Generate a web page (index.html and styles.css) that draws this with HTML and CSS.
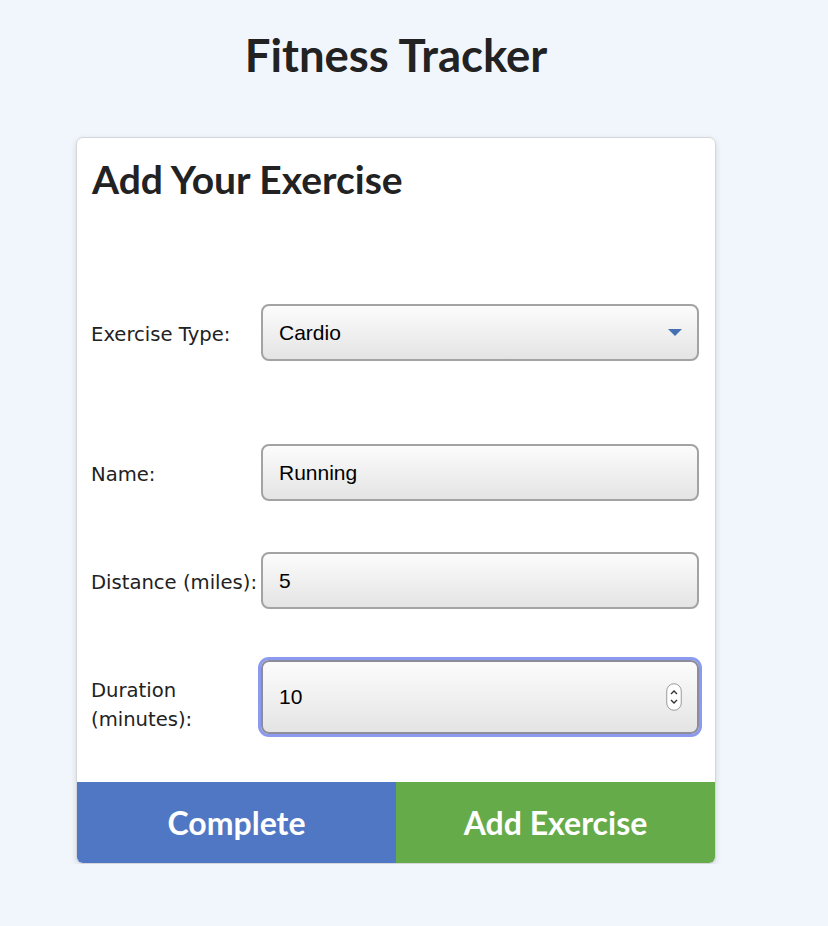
FILE: index.html
```html
<!DOCTYPE html>
<html lang="en">
<head>
<meta charset="utf-8">
<title>Fitness Tracker</title>
<link rel="stylesheet" href="styles.css">
</head>
<body>
<h1 class="page-title">Fitness Tracker</h1>
<div class="card">
  <h2 class="card-title">Add Your Exercise</h2>
  <form class="form">
    <div class="row row-first">
      <label class="label">Exercise Type:</label>
      <div class="field select">
        <span class="value">Cardio</span>
        <svg class="arrow" width="16" height="10" viewBox="0 0 16 10"><path d="M1 1 H15 L8 8 Z" fill="#4570b4"/></svg>
      </div>
    </div>
    <div class="row">
      <label class="label">Name:</label>
      <div class="field"><span class="value">Running</span></div>
    </div>
    <div class="row">
      <label class="label">Distance (miles):</label>
      <div class="field"><span class="value">5</span></div>
    </div>
    <div class="row">
      <label class="label">Duration<br>(minutes):</label>
      <div class="field focused">
        <span class="value">10</span>
        <svg class="spin" width="16" height="28" viewBox="0 0 16 28">
          <rect x="0.75" y="0.75" width="14.5" height="26.5" rx="7.25" fill="#fff" stroke="#9a9a9a" stroke-width="1"/>
          <path d="M5 11 L8 8 L11 11" fill="none" stroke="#333" stroke-width="1.4"/>
          <path d="M5 17 L8 20 L11 17" fill="none" stroke="#333" stroke-width="1.4"/>
        </svg>
      </div>
    </div>
  </form>
  <div class="actions">
    <button class="btn btn-complete" type="button">Complete</button>
    <button class="btn btn-add" type="button">Add Exercise</button>
  </div>
</div>
</body>
</html>
```

FILE: styles.css
```css
html, body {
  margin: 0;
  padding: 0;
}
body {
  background: #f1f6fd;
  font-family: "DejaVu Sans", sans-serif;
  color: #222;
}
.page-title {
  font-family: Lato, sans-serif;
  font-weight: 700;
  font-size: 45.5px;
  color: #222;
  margin: 0;
  padding-top: 28px;
  height: 110px;
  box-sizing: border-box;
  text-align: center;
  padding-right: 36px;
  line-height: 54px;
}
.card {
  margin: 27px 0 0 76px;
  width: 640px;
  box-sizing: border-box;
  background: #fff;
  border: 1px solid #d4d6da;
  border-radius: 7px;
  box-shadow: 0 2px 6px rgba(0,0,0,0.12);
  overflow: hidden;
}
.card-title {
  font-family: Lato, sans-serif;
  font-weight: 700;
  font-size: 39px;
  color: #222;
  margin: 0;
  padding: 18px 0 0 15px;
  line-height: 46px;
}
.form {
  display: flex;
  flex-direction: column;
  gap: 51px;
  padding: 102px 16px 48px 14px;
}
.row {
  display: flex;
  align-items: stretch;
}
.row-first {
  margin-bottom: 32px;
}
.label {
  width: 170px;
  flex: none;
  font-size: 19.6px;
  line-height: 29px;
  padding-top: 16px;
  color: #222;
  white-space: nowrap;
}
.field {
  flex: 1;
  min-height: 57px;
  box-sizing: border-box;
  border: 2px solid #a3a3a3;
  border-radius: 8px;
  background: linear-gradient(#fcfcfc, #e4e4e4);
  display: flex;
  align-items: center;
  padding: 0 16px 0 16px;
  font-family: "Liberation Sans", Arial, sans-serif;
  font-size: 21px;
  color: #000;
}
.value {
  flex: 1;
}
.focused {
  box-shadow: 0 0 0 3px #8b99ef;
  border-color: #8c8c9c;
}
.arrow {
  margin-right: -2px;
}
.spin {
  margin-right: -1px;
}
.actions {
  display: flex;
}
.btn {
  flex: 1;
  height: 81px;
  border: none;
  margin: 0;
  font-family: Lato, sans-serif;
  font-weight: 700;
  font-size: 32px;
  color: #fff;
  cursor: pointer;
}
.btn-complete {
  background: #5077c4;
}
.btn-add {
  background: #66ab4a;
}
```
